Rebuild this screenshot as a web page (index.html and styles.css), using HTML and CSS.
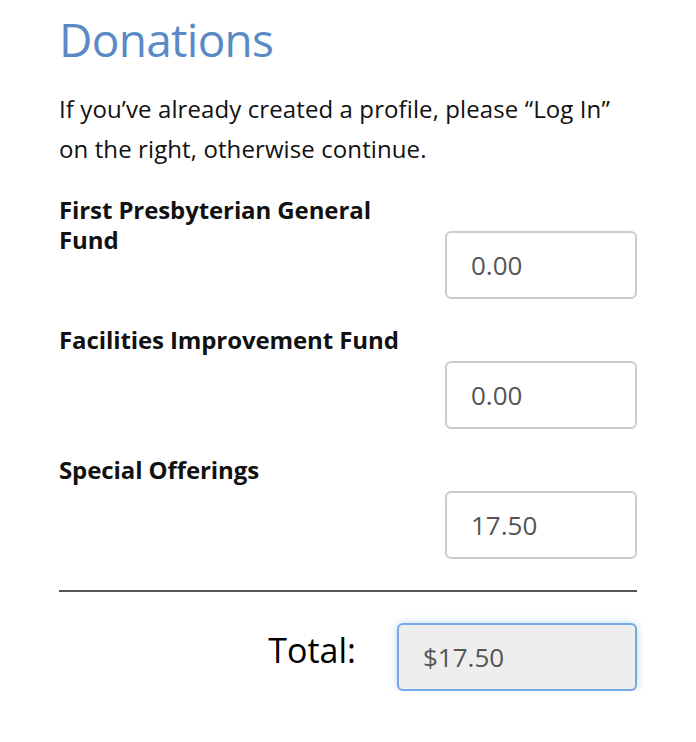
FILE: index.html
```html
<!DOCTYPE html>
<html>
<head>
<meta charset="utf-8">
<link rel="stylesheet" href="styles.css">
</head>
<body>
<div class="page">
  <h1 class="title">Donations</h1>
  <p class="intro">If you’ve already created a profile, please “Log In” on the right, otherwise continue.</p>
  <div class="fund">
    <div class="fund-label">First Presbyterian General Fund</div>
    <div class="fund-input"><input class="amount" type="text" value="0.00"></div>
  </div>
  <div class="fund">
    <div class="fund-label">Facilities Improvement Fund</div>
    <div class="fund-input"><input class="amount" type="text" value="0.00"></div>
  </div>
  <div class="fund">
    <div class="fund-label">Special Offerings</div>
    <div class="fund-input"><input class="amount" type="text" value="17.50"></div>
  </div>
  <hr class="divider">
  <div class="total-row">
    <div class="total-label">Total:</div>
    <input class="total" type="text" value="$17.50" readonly>
  </div>
</div>
</body>
</html>
```
FILE: styles.css
```css
html, body {
  margin: 0;
  padding: 0;
  background: #fff;
}
.page {
  width: 578px;
  padding: 11px 0 0 59px;
  font-family: "Open Sans", "Noto Sans", sans-serif;
  color: #111;
}
.title {
  margin: 0;
  font-size: 46px;
  font-weight: 400;
  line-height: 56px;
  color: #5a8ac6;
  letter-spacing: -0.7px;
}
.intro {
  margin: 22px 0 0;
  font-size: 24px;
  line-height: 40px;
  letter-spacing: 0.1px;
  max-width: 560px;
}
.fund {
  display: grid;
  grid-template-columns: 1fr 192px;
  height: 130px;
}
.intro + .fund {
  margin-top: 26px;
}
.fund-label {
  font-size: 24px;
  font-weight: 700;
  line-height: 30px;
  width: 340px;
  letter-spacing: -0.1px;
}
.fund-input {
  padding-top: 36px;
}
.amount {
  box-sizing: border-box;
  width: 192px;
  height: 68px;
  border: 2px solid #ccc;
  border-radius: 6px;
  padding: 0 24px;
  font-family: "Open Sans", "Noto Sans", sans-serif;
  font-size: 26px;
  color: #555;
  background: #fff;
  outline: none;
}
.divider {
  margin: 5px 0 0;
  border: 0;
  border-top: 2px solid #555;
}
.total-row {
  display: flex;
  justify-content: flex-end;
  align-items: flex-start;
  margin-top: 31px;
  gap: 41px;
}
.total-label {
  margin-top: 5px;
  font-size: 34px;
  line-height: 44px;
  color: #000;
}
.total {
  box-sizing: border-box;
  width: 240px;
  height: 68px;
  border: 2px solid #74a9e4;
  border-radius: 6px;
  padding: 0 24px;
  font-family: "Open Sans", "Noto Sans", sans-serif;
  font-size: 26px;
  color: #555;
  background: #eee;
  box-shadow: 0 0 9px rgba(102, 163, 224, 0.45);
  outline: none;
}
```
